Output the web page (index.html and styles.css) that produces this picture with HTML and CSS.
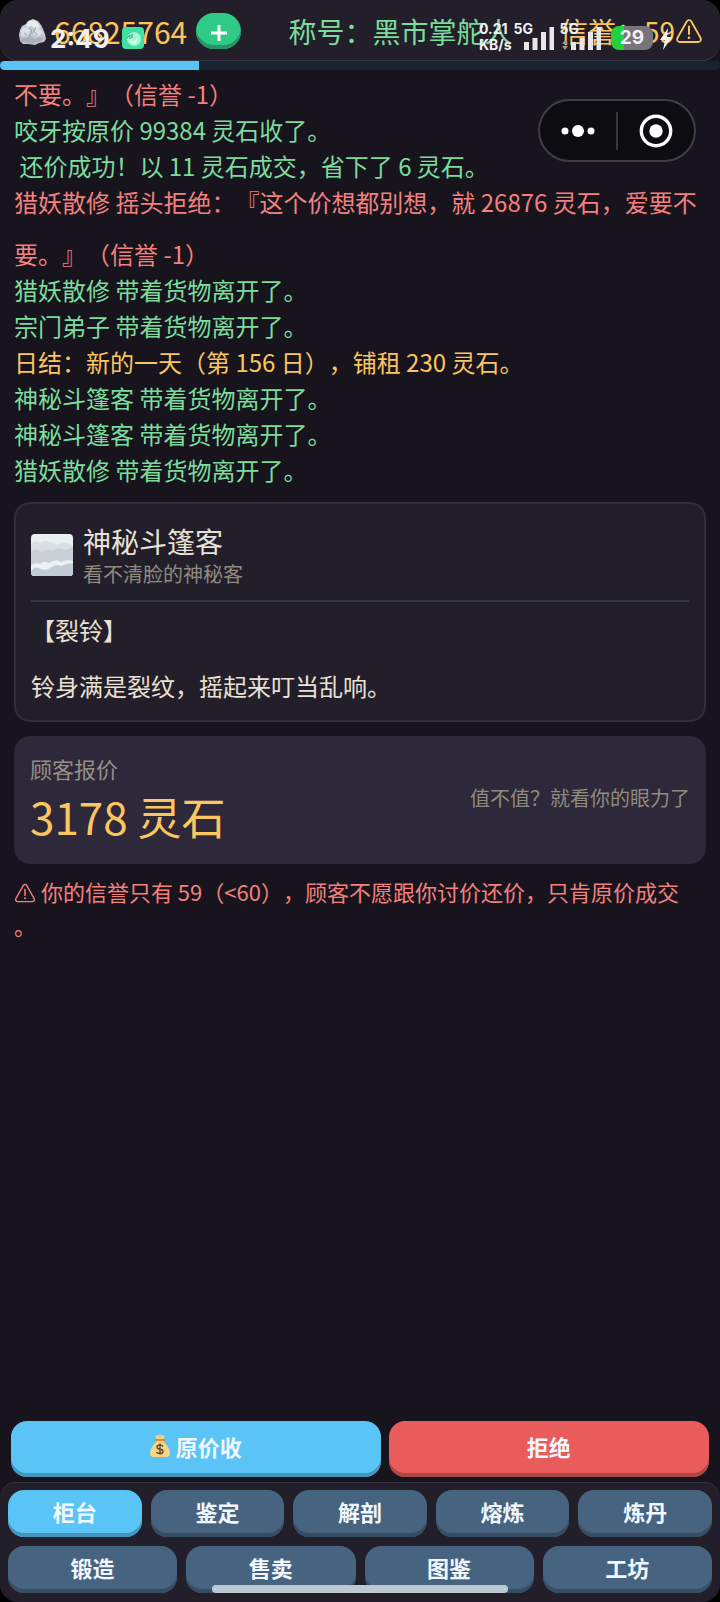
FILE: index.html
```html
<!DOCTYPE html>
<html lang="zh-CN">
<head>
<meta charset="utf-8">
<meta name="viewport" content="width=device-width, initial-scale=1">
<title>柜台</title>
<link rel="stylesheet" href="styles.css">
</head>
<body>
<svg class="defs" aria-hidden="true">
  <symbol id="warn" viewBox="0 0 28 28">
    <path d="M14 3.200c1 0 1.800.5 2.300 1.300l9.300 16.500c1 1.800-.2 4-2.300 4H4.700c-2.100 0-3.300-2.200-2.300-4L11.700 4.500c.5-.8 1.300-1.300 2.300-1.300z" fill="none" stroke="currentColor" stroke-width="1.800"/>
    <path d="M14 9.500v7.500" stroke="currentColor" stroke-width="2" stroke-linecap="round"/>
    <circle cx="14" cy="20.700" r="1.300" fill="currentColor"/>
  </symbol>
</svg>
<div class="app">
  <header class="topbar">
    <div class="coins">
      <svg class="stone" viewBox="0 0 28 28" aria-hidden="true">
        <path d="M1 17l1-5 2-4 4-2 2-3 5-2 5 2 3 4 2 4 2 5 1 5-2 3-5 1-4 2-7-1-5 0-3-3z" fill="#c5c9cd"/>
        <path d="M8 7l3-4 5-1 4 3 2 4-4 2-5-3-4 1z" fill="#e8ebed"/>
        <path d="M3 12l5-3 4 3-2 5-6 1zM16 12l5-2 4 5-4 3-5-1z" fill="#dde1e4"/>
        <path d="M2 19l5 1 5-2 5 3 5-2 4 1-2 3-5 1-4 2-7-1-5-1z" fill="#a9afb5"/>
        <path d="M12 10l2 4-3 4M18 9l-2 4 3 4M6 15l3 2" fill="none" stroke="#9ba2a9"/>
      </svg>
      <span class="coin-count">66825764</span>
      <button class="add" type="button" aria-label="增加">
        <svg viewBox="0 0 18 18"><path d="M9 1v16M1 9h16" stroke="#fff" stroke-width="3"/></svg>
      </button>
    </div>
    <span class="rank">称号：黑市掌舵人</span>
    <span class="credit">信誉：59<svg class="icon-lg"><use href="#warn"/></svg></span>
  </header>
  <div class="progress"><div class="progress-fill" style="width:27.7%"></div></div>

  <main class="content">
    <section class="log">
      <p class="bad">不要。』（信誉 -1）</p>
      <p>咬牙按原价 99384 灵石收了。</p>
      <p>&nbsp;还价成功！以 11 灵石成交，省下了 6 灵石。</p>
      <p class="bad">猎妖散修 摇头拒绝：『这个价想都别想，就 26876 灵石，爱要不要。』（信誉 -1）</p>
      <p>猎妖散修 带着货物离开了。</p>
      <p>宗门弟子 带着货物离开了。</p>
      <p class="day">日结：新的一天（第 156 日），铺租 230 灵石。</p>
      <p>神秘斗篷客 带着货物离开了。</p>
      <p>神秘斗篷客 带着货物离开了。</p>
      <p>猎妖散修 带着货物离开了。</p>
    </section>

    <section class="card">
      <div class="guest">
        <svg class="avatar" viewBox="0 0 42 42" aria-hidden="true">
          <rect width="42" height="42" fill="#eceff2"/>
          <path d="M0 10q5-4 9-1 6-5 12 0 6 3 10 0 5-2 11 3v30H0z" fill="#d9dfe3"/>
          <path d="M0 17q6-3 10 1 6-4 12-1 5-5 12-1l8-3v29H0z" fill="#c8d0d6"/>
          <path d="M0 31q5-3 9-1 4-4 9-1 7-5 12-1 6-3 12-1v15H0z" fill="#eef1f3"/>
          <path d="M0 37q4-6 10-2 5 2 9-1 6-5 11-2 6-3 12-3v13H0z" fill="#c2ccd6"/>
        </svg>
        <div>
          <h1 class="guest-name">神秘斗篷客</h1>
          <p class="guest-note">看不清脸的神秘客</p>
        </div>
      </div>
      <div class="item">
        <p>【裂铃】</p>
        <p>铃身满是裂纹，摇起来叮当乱响。</p>
      </div>
    </section>

    <section class="offer">
      <div>
        <p class="offer-label">顾客报价</p>
        <p class="offer-price">3178 灵石</p>
      </div>
      <p class="offer-hint">值不值？就看你的眼力了</p>
    </section>

    <p class="notice"><svg class="icon-sm"><use href="#warn"/></svg> 你的信誉只有 59（&lt;60），顾客不愿跟你讨价还价，只肯原价成交。</p>
  </main>

  <div class="actions">
    <button class="btn buy" type="button">
      <svg class="bag" viewBox="0 0 20 24" aria-hidden="true">
        <path d="M5 2q5-2 10 0l-2 4H7z" fill="#f3cf7d"/>
        <path d="M7 7h6c4 4 7 8 7 12q0 4-4 4H4q-4 0-4-4C0 15 3 11 7 7z" fill="#f8d583"/>
        <rect x="5" y="5" width="10" height="2" rx="1" fill="#e58a3c"/>
        <path d="M13 12.500q-1-1.500-3-1.500-3 0-3 2t3 2.200 3 2.300-3 2-3.300-1.700M10 9.500v11" fill="none" stroke="#5b4a3c" stroke-width="1.400"/>
      </svg>
      原价收</button>
    <button class="btn refuse" type="button">拒绝</button>
  </div>

  <nav class="tabs">
    <div class="tab-row">
      <button class="btn tab active" type="button">柜台</button>
      <button class="btn tab" type="button">鉴定</button>
      <button class="btn tab" type="button">解剖</button>
      <button class="btn tab" type="button">熔炼</button>
      <button class="btn tab" type="button">炼丹</button>
    </div>
    <div class="tab-row">
      <button class="btn tab" type="button">锻造</button>
      <button class="btn tab" type="button">售卖</button>
      <button class="btn tab" type="button">图鉴</button>
      <button class="btn tab" type="button">工坊</button>
    </div>
  </nav>

  <div class="status">
    <span class="clock">2:49</span>
    <svg class="status-app" viewBox="0 0 22 22" aria-hidden="true">
      <rect width="22" height="22" rx="4" fill="#3fe0a0"/>
      <circle cx="12" cy="12" r="7" fill="#a5f5d5"/>
      <path d="M7 13q5 4 9-3-1 8-6 7z" fill="#e2fff3"/>
      <path d="M5 11l3-3v4M10 7v4" stroke="#2a9c78" fill="none"/>
    </svg>
    <span class="speed">0.21<br>KB/s</span>
    <span class="net">5G</span>
    <svg class="bars" viewBox="0 0 30 24" aria-hidden="true"><path d="M2.500 24v-8M11 24v-12M19.500 24v-18M28 24V1" stroke="#e9e6ea" stroke-width="5"/></svg>
    <span class="net net-two">5G</span>
    <svg class="bars bars-two" viewBox="0 0 30 24" aria-hidden="true"><path d="M2.500 24v-8M11 24v-12M19.500 24v-18M28 24V1" stroke="#e9e6ea" stroke-width="5"/></svg>
    <svg class="data" viewBox="0 0 6 10" aria-hidden="true"><path d="M3 0l3 4H0zM3 10l3-4H0z" fill="#9a969f"/></svg>
    <span class="battery">29</span>
    <svg class="bolt" viewBox="0 0 12 22" aria-hidden="true"><path d="M8 0L0 12h5L3 22l9-13H7z" fill="#f3f1f4"/></svg>
  </div>

  <div class="capsule">
    <button type="button" aria-label="更多"><svg viewBox="0 0 34 14"><g fill="#fff"><circle cx="4" cy="7" r="3.500"/><circle cx="17" cy="7" r="6"/><circle cx="30" cy="7" r="3.500"/></g></svg></button>
    <button type="button" aria-label="关闭"><svg viewBox="0 0 34 34"><circle cx="17" cy="17" r="14.700" fill="none" stroke="#fff" stroke-width="3.400"/><circle cx="17" cy="17" r="6.700" fill="#fff"/></svg></button>
  </div>
  <div class="home-bar"></div>
</div>
</body>
</html>
```
FILE: styles.css
```css
* { box-sizing: border-box; }
body {
  margin: 0;
  background: #000;
  font-family: "Noto Sans CJK SC", sans-serif;
  text-spacing-trim: space-all;
}
p, h1 { margin: 0; font-weight: 400; }
button { font-family: inherit; border: 0; padding: 0; }
svg { display: block; flex: none; }
.defs { position: absolute; width: 0; height: 0; }

.app {
  position: relative;
  display: flex;
  flex-direction: column;
  min-height: 100vh;
  background: #17141d;
  border-radius: 18px;
  overflow: hidden;
}

.topbar {
  display: flex;
  align-items: center;
  justify-content: space-between;
  height: 61px;
  padding: 2px 17px 0 18px;
  background: #231f2a;
  border-bottom: 1px solid #3a3744;
  border-radius: 0 0 18px 18px;
  font-size: 28px;
  line-height: 40px;
}
.coins { display: flex; align-items: center; }
.stone { width: 28px; height: 28px; margin: 2px 8px 0 0; }
.coin-count { font-size: 30px; color: #fbc55f; margin-right: 9px; }
.add {
  display: flex;
  align-items: center;
  justify-content: center;
  width: 45px;
  height: 36px;
  border-radius: 18px;
  background: #2fca85;
  box-shadow: inset 0 -4px #269465;
}
.add svg { width: 18px; height: 18px; margin-top: 4px; }
.rank { color: #7bdc9c; }
.credit { display: flex; align-items: center; color: #fbc55f; }
.icon-lg { width: 28px; height: 28px; }

.progress { height: 9px; background: #182330; border-radius: 0 5px 5px 0; }
.progress-fill { height: 100%; background: #5ac4f6; border-radius: 5px 0 0 5px; }

.content { flex: 1; padding: 0 14px; }
.log {
  margin-top: -2px;
  padding-bottom: 6px;
  color: #7bdc9c;
  font-size: 24px;
  line-height: 52px;
}
.log p + p { margin-top: -16px; }
.log .bad { color: #f4807d; }
.log .day { color: #fbc55f; }

.card {
  padding: 18px 15px 6px;
  border: 2px solid #302e3b;
  border-radius: 16px;
  background: #231f2a;
  color: #e9e1d3;
}
.guest {
  display: flex;
  align-items: center;
  gap: 10px;
  padding-bottom: 12px;
  border-bottom: 2px solid #323744;
}
.avatar { width: 42px; height: 42px; border-radius: 4px; }
.guest-name { font-size: 28px; line-height: 38px; }
.guest-note { font-size: 20px; line-height: 28px; color: #918a7f; }
.item { font-size: 24px; line-height: 56px; }

.offer {
  display: flex;
  align-items: center;
  justify-content: space-between;
  margin-top: 14px;
  padding: 14px 16px 18px;
  border-radius: 16px;
  background: #2e293a;
}
.offer-label { font-size: 22px; line-height: 36px; color: #968f86; }
.offer-price { font-size: 44px; line-height: 60px; color: #fbc55f; }
.offer-hint { font-size: 20px; line-height: 28px; color: #918a7f; }

.notice {
  margin-top: 10px;
  padding-right: 12px;
  font-size: 22px;
  line-height: 34px;
  color: #f4807d;
  line-break: anywhere;
}
.icon-sm { display: inline-block; width: 22px; height: 22px; vertical-align: -3px; }

.actions { display: flex; gap: 8px; padding: 0 11px 5px; }
.btn {
  display: flex;
  align-items: center;
  justify-content: center;
  gap: 6px;
  font-size: 22px;
  line-height: 32px;
  font-weight: 700;
  color: #f1f7ff;
}
.buy, .refuse { height: 56px; padding-bottom: 6px; border-radius: 16px; }
.buy { flex: 15; background: #5ac4f6; box-shadow: inset 0 -4px #4595bb; }
.refuse { flex: 13; background: #e95c5b; box-shadow: inset 0 -4px #ac4647; }
.bag { width: 20px; height: 24px; }

.tabs {
  display: grid;
  gap: 9px;
  padding: 7px 8px 9px;
  background: #231f2a;
  border-top: 1px solid #3a3744;
  border-radius: 16px 16px 0 0;
}
.tab-row { display: flex; gap: 9px; }
.tab {
  flex: 1;
  height: 47px;
  padding-bottom: 5px;
  border-radius: 16px;
  background: #466480;
  box-shadow: inset 0 -4px #374d64;
}
.tab.active { background: #5ac4f6; box-shadow: inset 0 -4px #4595bb; }

/* System overlays */
.status {
  position: absolute;
  inset: 0 0 auto;
  height: 60px;
  color: #f3f1f4;
  font-family: Inter, sans-serif;
  font-weight: 700;
  pointer-events: none;
}
.status > * { position: absolute; }
.clock { left: 50px; top: 22px; font-size: 26px; line-height: 34px; }
.status-app { left: 122px; top: 27px; width: 22px; height: 22px; }
.speed { left: 479px; top: 21px; font-size: 14px; line-height: 16px; }
.net { right: 187px; top: 21px; font-size: 14px; line-height: 16px; }
.net-two { right: 141px; }
.bars { right: 166px; top: 26px; width: 30px; height: 24px; }
.bars-two { right: 119px; }
.data { right: 152px; top: 40px; width: 6px; height: 10px; }
.battery {
  right: 67px;
  top: 26px;
  width: 42px;
  border-radius: 8px;
  background: linear-gradient(90deg, #22cf3c 30%, #77747b 30%);
  text-align: center;
  font-size: 19px;
  line-height: 24px;
}
.bolt { right: 48px; top: 28px; width: 12px; height: 22px; }

.capsule {
  position: absolute;
  top: 99px;
  right: 24px;
  display: flex;
  align-items: center;
  width: 158px;
  height: 63px;
  border: 2px solid #403e45;
  border-radius: 32px;
  background: #0d0c10;
}
.capsule button {
  flex: 1;
  display: flex;
  align-items: center;
  justify-content: center;
  height: 38px;
  background: none;
}
.capsule button + button { border-left: 2px solid #3a383f; }
.capsule svg { width: 34px; }

.home-bar {
  position: absolute;
  left: 50%;
  bottom: 9px;
  width: 296px;
  height: 8px;
  margin-left: -148px;
  border-radius: 4px;
  background: #bcc8d2;
}
```
